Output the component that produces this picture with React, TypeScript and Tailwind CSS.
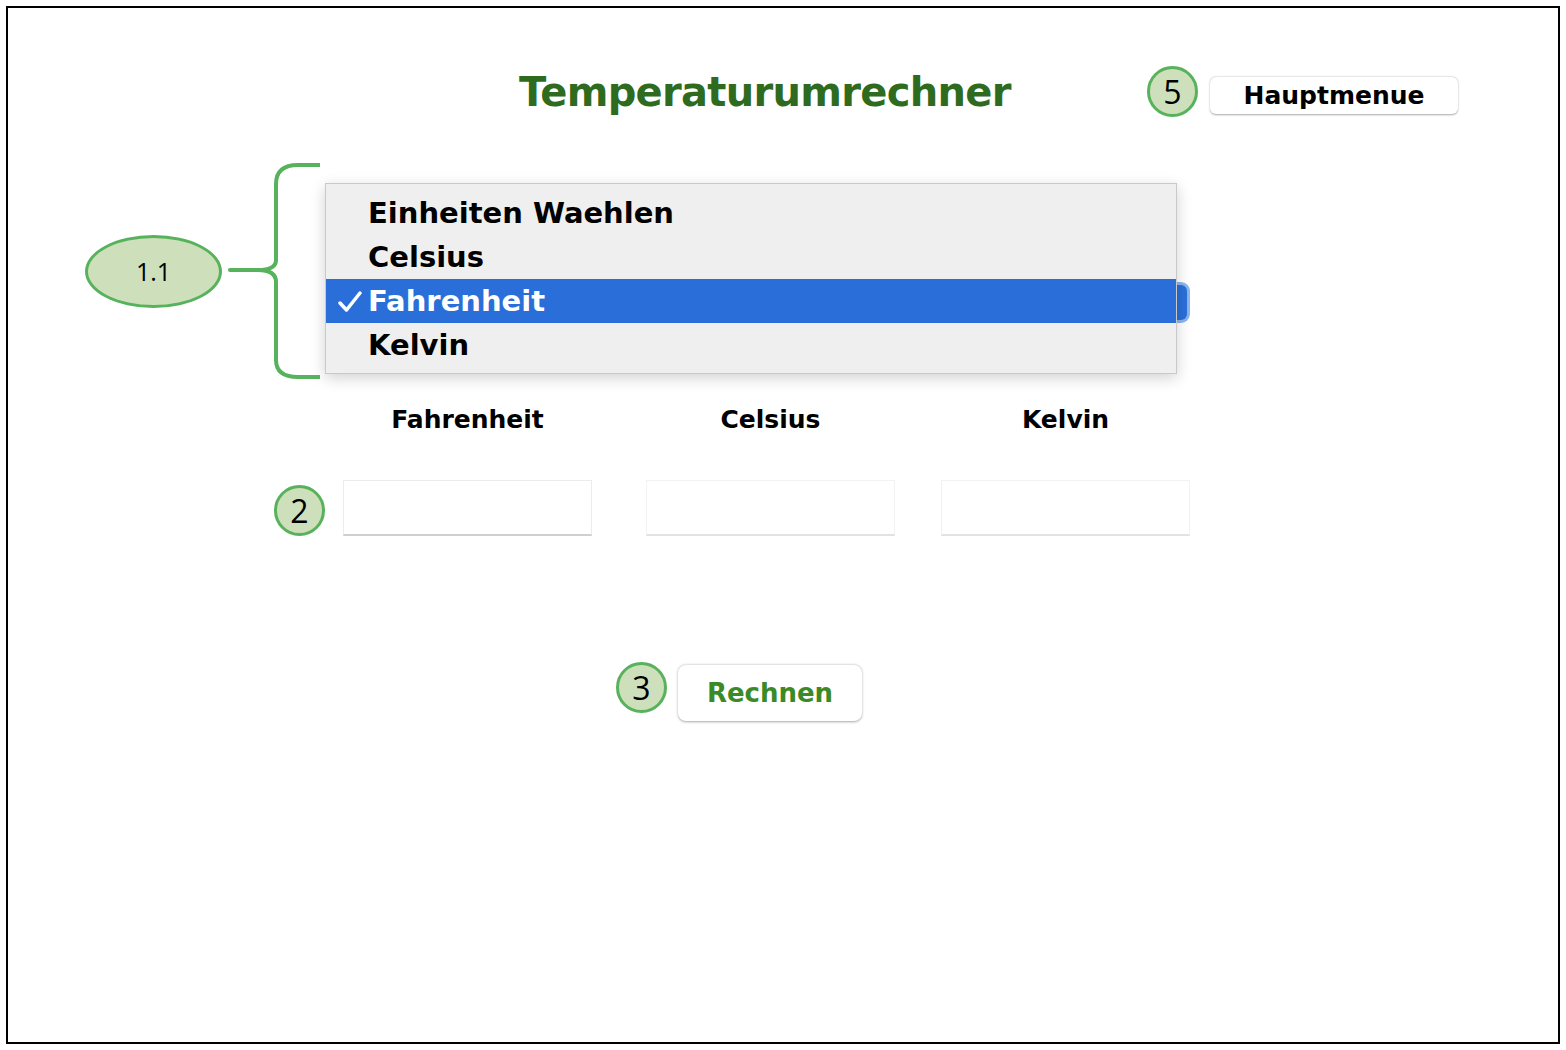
import React from "react";

const font = { fontFamily: '"DejaVu Sans", Verdana, sans-serif' };

function Badge({ n, className }: { n: string; className: string }) {
  return (
    <div
      className={`absolute flex items-center justify-center rounded-full border-[3px] border-[#58b25c] bg-[#cde0bb] text-black text-[32px] leading-none ${className}`}
      style={{ fontFamily: '"Open Sans", "Noto Sans", sans-serif' }}
    >
      {n}
    </div>
  );
}

export default function App() {
  return (
    <div className="w-[1566px] h-[1050px] bg-white p-[6px]" style={font}>
      <div className="relative h-full w-full border-2 border-black">
        {/* Header row */}
        <div className="flex items-start pt-[54px]">
          <h1 className="ml-[511px] text-[40px] font-bold leading-[60px] text-[#2e6b1f] tracking-[-0.7px]">
            Temperaturumrechner
          </h1>
          <button className="ml-[auto] mr-[100px] mt-[15px] h-[37px] w-[248px] rounded-[6px] bg-white text-[25px] font-bold leading-none text-black shadow-[0_0.5px_2px_rgba(0,0,0,0.35)]">
            Hauptmenue
          </button>
        </div>

        {/* Select (underneath the open menu) */}
        <div className="ml-[322px] mt-[163px] h-[35px] w-[857px] rounded-[6px] bg-[#2a6fd9] ring-[3px] ring-[#8bb5ef]" />

        {/* Labels */}
        <div className="mt-[85px] ml-[335px] flex text-[25px] font-bold leading-[30px] text-black">
          <div className="w-[249px] text-center">Fahrenheit</div>
          <div className="ml-[54px] w-[249px] text-center">Celsius</div>
          <div className="ml-[46px] w-[249px] text-center">Kelvin</div>
        </div>

        {/* Inputs */}
        <div className="mt-[45px] ml-[335px] flex">
          <div className="h-[56px] w-[249px] border border-[#ececec] border-b-[2px] border-b-[#cfcfcf] bg-white" />
          <div className="ml-[54px] h-[56px] w-[249px] border border-[#f2f2f2] border-b-[2px] border-b-[#e2e2e2] bg-white" />
          <div className="ml-[46px] h-[56px] w-[249px] border border-[#f2f2f2] border-b-[2px] border-b-[#e2e2e2] bg-white" />
        </div>

        {/* Rechnen */}
        <div className="mt-[129px] ml-[670px]">
          <button className="h-[56px] w-[184px] rounded-[8px] bg-white text-[26px] font-bold leading-none text-[#3b8a27] shadow-[0_0.5px_2.5px_rgba(0,0,0,0.35)]">
            Rechnen
          </button>
        </div>

        {/* Open dropdown menu */}
        <div className="absolute left-[317px] top-[175px] w-[852px] border border-[#c9c9c9] bg-[#efefef] pt-[7px] pb-[6px] text-[29px] font-bold leading-[44px] text-black shadow-[0_4px_14px_rgba(0,0,0,0.18)]">
          <div className="pl-[42px]">Einheiten Waehlen</div>
          <div className="pl-[42px]">Celsius</div>
          <div className="relative bg-[#2a6fd9] pl-[42px] text-white">
            <svg className="absolute left-[12px] top-[12px]" width="24" height="22" viewBox="0 0 24 22">
              <path d="M2 12 L8.5 19 L22 2" fill="none" stroke="#ffffff" strokeWidth="3.5" strokeLinecap="round" strokeLinejoin="round" />
            </svg>
            Fahrenheit
          </div>
          <div className="pl-[42px]">Kelvin</div>
        </div>

        {/* Annotations */}
        <div
          className="absolute left-[77px] top-[227px] flex h-[73px] w-[137px] items-center justify-center rounded-[50%] border-[3px] border-[#58b25c] bg-[#cde0bb] text-[25px] text-black"
          style={{ fontFamily: '"Open Sans", "Noto Sans", sans-serif' }}
        >
          1.1
        </div>
        <svg className="absolute left-[220px] top-[152px]" width="100" height="230" viewBox="0 0 100 230">
          <path
            d="M92 5 L70 5 Q48 5 48 24 L48 100 Q48 110 30 110 L2 110 L30 110 Q48 110 48 122 L48 200 Q48 217 70 217 L92 217"
            fill="none"
            stroke="#58b25c"
            strokeWidth="4"
            strokeLinejoin="round"
          />
        </svg>
        <Badge n="5" className="left-[1139px] top-[58px] h-[51px] w-[51px]" />
        <Badge n="2" className="left-[266px] top-[477px] h-[51px] w-[51px]" />
        <Badge n="3" className="left-[608px] top-[654px] h-[51px] w-[51px]" />
      </div>
    </div>
  );
}
